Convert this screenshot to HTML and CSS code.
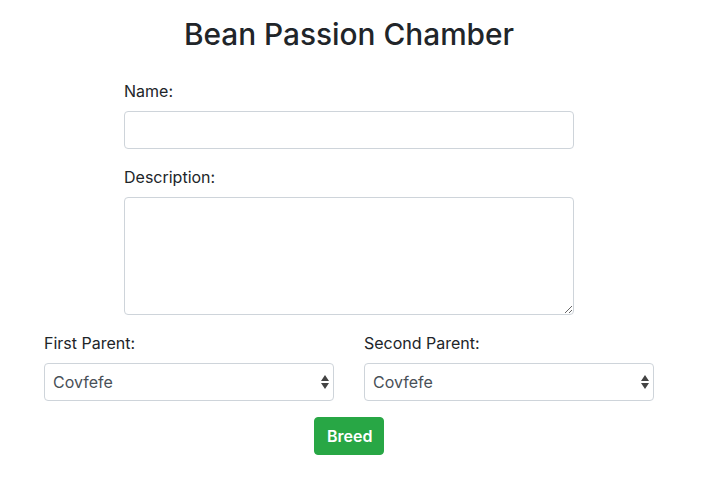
FILE: index.html
```html
<!DOCTYPE html>
<html>
<head>
<meta charset="utf-8">
<link rel="stylesheet" href="styles.css">
</head>
<body>
<div class="page">
  <h1 class="title">Bean Passion Chamber</h1>
  <form class="form">
    <div class="narrow">
      <div class="group">
        <label class="label">Name:</label>
        <input class="control" type="text">
      </div>
      <div class="group">
        <label class="label">Description:</label>
        <textarea class="control area"></textarea>
      </div>
    </div>
    <div class="parents">
      <div class="col">
        <label class="label">First Parent:</label>
        <div class="select-wrap">
          <select class="control select"><option>Covfefe</option></select>
          <svg class="arrows" width="8" height="15" viewBox="0 0 8 15"><path d="M4 0 L8 6 L0 6 Z M0 8 L8 8 L4 14 Z" fill="#444"/></svg>
        </div>
      </div>
      <div class="col">
        <label class="label">Second Parent:</label>
        <div class="select-wrap">
          <select class="control select"><option>Covfefe</option></select>
          <svg class="arrows" width="8" height="15" viewBox="0 0 8 15"><path d="M4 0 L8 6 L0 6 Z M0 8 L8 8 L4 14 Z" fill="#444"/></svg>
        </div>
      </div>
    </div>
    <div class="actions">
      <button type="button" class="btn">Breed</button>
    </div>
  </form>
</div>
</body>
</html>
```

FILE: styles.css
```css
* { box-sizing: border-box; }
body {
  margin: 0;
  font-family: Inter, "Liberation Sans", Arial, sans-serif;
  font-size: 16px;
  line-height: 1.5;
  color: #212529;
  background: #fff;
}
.page {
  width: 698px;
}
.title {
  margin: 17px 0 26px;
  font-size: 29.8px;
  font-weight: 500;
  line-height: 1.2;
  text-align: center;
  color: #212529;
}
.narrow {
  width: 450px;
  margin: 0 auto;
}
.group {
  margin-bottom: 16px;
}
.label {
  display: block;
  margin-bottom: 8px;
  line-height: 24px;
}
.control {
  display: block;
  width: 100%;
  height: 38px;
  padding: 6px 12px;
  font-family: inherit;
  font-size: 16px;
  color: #495057;
  background: #fff;
  border: 1px solid #ced4da;
  border-radius: 4px;
  outline: none;
}
.area {
  height: 118px;
  resize: vertical;
}
.parents {
  width: 640px;
  margin: 0 auto;
  padding: 0 15px;
  display: grid;
  grid-template-columns: 1fr 1fr;
  column-gap: 30px;
}
.select-wrap {
  position: relative;
}
.select {
  -webkit-appearance: none;
  appearance: none;
  padding: 6px 8px;
}
.arrows {
  position: absolute;
  right: 5px;
  top: 12px;
}
.actions {
  display: flex;
  justify-content: center;
  margin-top: 16px;
}
.btn {
  width: 70px;
  height: 38px;
  padding: 6px 12px;
  font-family: inherit;
  font-size: 16px;
  font-weight: 600;
  color: #fff;
  background: #28a745;
  border: 1px solid #28a745;
  border-radius: 4px;
}
```
